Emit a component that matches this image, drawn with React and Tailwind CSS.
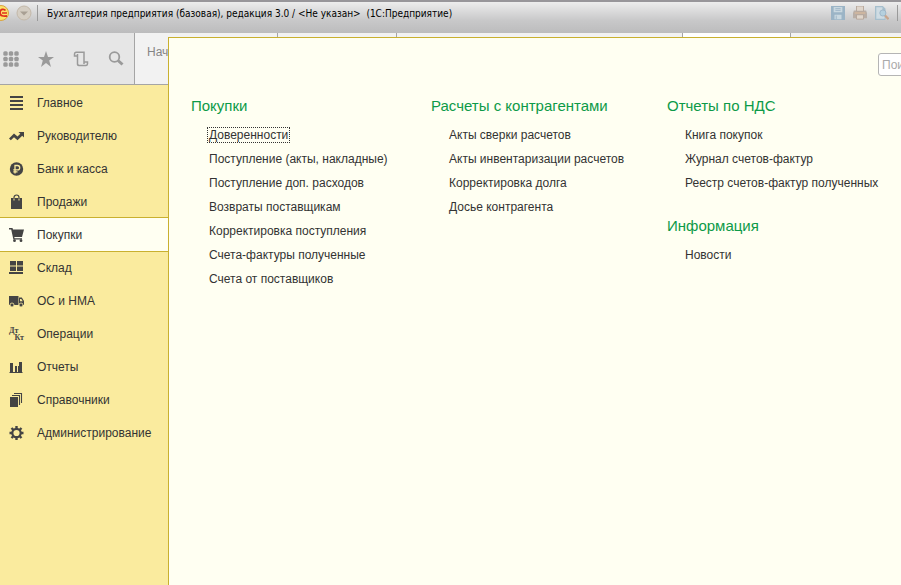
import React, { useState } from 'react';
import clsx from 'clsx';

function Icon({ children, size = 16, className }) {
  return (
    <svg width={size} height={size} viewBox="0 0 16 16" fill="currentColor" className={clsx('shrink-0', className)} aria-hidden="true">
      {children}
    </svg>
  );
}

const icons = {
  main: <Icon><path d="M2 1h13v2H2zM2 5h13v2H2zM2 9h13v2H2zM2 13h13v2H2z" /></Icon>,
  manager: <Icon><path d="M1 10.500L6 5.500l3.500 3 2.800-2.800L10.500 4H16v5.500L14.200 7.700 9.500 12.200 6 9.200 2.800 12.300z" /></Icon>,
  bank: (
    <Icon>
      <circle cx="8.500" cy="8" r="6.700" />
      <path d="M7 12.500V4.500h2.500a2.200 2.200 0 0 1 0 4.400H5.300M5.300 10.800H9.500" fill="none" stroke="#faeb9e" strokeWidth="1.300" />
    </Icon>
  ),
  sales: (
    <Icon>
      <path d="M3 4h11v11H3z" />
      <path d="M6 7V3.500a2.500 2.500 0 0 1 5 0V7" fill="none" stroke="currentColor" strokeWidth="1.200" />
      <path d="M6 4.500v2M11 4.500v2" stroke="#faeb9e" strokeWidth="1" />
    </Icon>
  ),
  purchases: (
    <Icon>
      <path d="M1 1h3.500L5 2.500h11L14 10H6.300l.3 1.200H14v1.300H5.400L3.200 2.500H1z" />
      <circle cx="6.500" cy="13.700" r="1.400" />
      <circle cx="13" cy="13.700" r="1.400" />
    </Icon>
  ),
  stock: <Icon><path d="M2 1h6v4.500H2zM9 1h6v4.500H9zM2 6.500h6V11H2zM9 6.500h6V11H9zM1 12h14v2H1z" /></Icon>,
  assets: (
    <Icon>
      <path d="M1 3h9.500v9H1zM11 4.500h2.800L16 8v4h-5z" />
      <path d="M12 6h1.300l1.400 2.200H12z" fill="#faeb9e" />
      <circle cx="4" cy="12" r="2" stroke="#faeb9e" strokeWidth=".8" />
      <circle cx="13" cy="12" r="2" stroke="#faeb9e" strokeWidth=".8" />
    </Icon>
  ),
  operations: (
    <span className="flex w-4 shrink-0 flex-col pl-px font-['Liberation_Serif',serif] text-[8px] leading-[7px] font-bold">
      <span>Дт</span>
      <span className="self-end">Кт</span>
    </span>
  ),
  reports: <Icon><path d="M2 4h3v9H2zM7 7h2v6H7zM10 7h1v6h-1zM11 3h3v10h-3zM1.500 13h13v1h-13z" /></Icon>,
  catalogs: (
    <Icon>
      <path d="M2 5h8v10H2z" />
      <path d="M4 3.500h7.500V13M6 1.500h7.500V11" fill="none" stroke="currentColor" strokeWidth="1.100" />
    </Icon>
  ),
  admin: (
    <Icon>
      <circle cx="8.500" cy="8" r="4.200" fill="none" stroke="currentColor" strokeWidth="2.200" />
      <path d="M8.500 1v3M8.500 12v3M1.500 8h3M12.500 8h3M3.500 3l2 2M11.500 11l2 2M13.500 3l-2 2M5.500 11l-2 2" stroke="currentColor" strokeWidth="2.400" />
    </Icon>
  ),
};

const sections = [
  { id: 'main', label: 'Главное' },
  { id: 'manager', label: 'Руководителю' },
  { id: 'bank', label: 'Банк и касса' },
  { id: 'sales', label: 'Продажи' },
  { id: 'purchases', label: 'Покупки' },
  { id: 'stock', label: 'Склад' },
  { id: 'assets', label: 'ОС и НМА' },
  { id: 'operations', label: 'Операции' },
  { id: 'reports', label: 'Отчеты' },
  { id: 'catalogs', label: 'Справочники' },
  { id: 'admin', label: 'Администрирование' },
];

const columns = [
  [
    {
      title: 'Покупки',
      links: [
        'Доверенности',
        'Поступление (акты, накладные)',
        'Поступление доп. расходов',
        'Возвраты поставщикам',
        'Корректировка поступления',
        'Счета-фактуры полученные',
        'Счета от поставщиков',
      ],
    },
  ],
  [
    {
      title: 'Расчеты с контрагентами',
      links: ['Акты сверки расчетов', 'Акты инвентаризации расчетов', 'Корректировка долга', 'Досье контрагента'],
    },
  ],
  [
    {
      title: 'Отчеты по НДС',
      links: ['Книга покупок', 'Журнал счетов-фактур', 'Реестр счетов-фактур полученных'],
    },
    { title: 'Информация', links: ['Новости'] },
  ],
];

function TitleBar() {
  return (
    <header className="flex h-[33px] items-start justify-between overflow-hidden border-t-2 border-[#98969a] bg-linear-to-b from-[#ededed] via-[#c8c8c9] via-60% to-[#bcbcbd]">
      <div className="flex h-[22px] items-center">
        <svg width="32" height="18" viewBox="0 0 32 18" aria-hidden="true">
          <circle cx="1" cy="9" r="7.500" fill="#fbe36a" stroke="#d9a441" />
          <path d="M5.500 6.500C4 4.500 0 5 0 8.500S3 12.500 7 12" fill="none" stroke="#e0301e" strokeWidth="1.800" />
          <path d="M2 9h5" stroke="#e0301e" strokeWidth="1.500" />
          <circle cx="24" cy="9" r="7" fill="#d5cec3" stroke="#c3b8a9" />
          <path d="M20 7.500h8L24 11.500z" fill="#a89f93" />
        </svg>
        <span className="ml-[5px] h-4 w-px bg-[#9a9a9a]"></span>
        <h1 className="ml-[9px] font-['DejaVu_Sans_Condensed','Liberation_Sans',sans-serif] text-[10px] whitespace-pre text-black">
          Бухгалтерия предприятия (базовая), редакция 3.0 / &lt;Не указан&gt;  (1С:Предприятие)
        </h1>
      </div>
      <div className="flex h-[22px] items-center gap-2">
        <button type="button" aria-label="Сохранить">
          <Icon size={14} className="text-[#9bb4c6]">
            <path d="M0 0h16v16H0z" />
            <path d="M3 1h10v6H3zM4 10h8v5H4z" fill="#c9d8e0" />
            <path d="M5 3h6M5 5h6M6 11v4" stroke="#9bb4c6" />
          </Icon>
        </button>
        <button type="button" aria-label="Печать">
          <Icon size={14} className="text-[#b9aea6]">
            <path d="M1 5h14l1 3v6H0V8z" />
            <path d="M4 0h8v6H4zM4 10h8v5H4z" fill="#e0d6cc" stroke="#b3a398" />
            <path d="M2 8h12" stroke="#d8b99c" strokeWidth="1.500" />
          </Icon>
        </button>
        <button type="button" aria-label="Предварительный просмотр">
          <Icon size={14} className="text-[#a6bfcd]">
            <path d="M0 0h9l3 3v13H0z" />
            <path d="M1.500 1.500h7v3h2.500v10H1.500z" fill="#cfdce3" />
            <circle cx="9" cy="8" r="3.500" fill="#b5d0de" stroke="#9bb4c6" />
            <path d="M11.500 11l4 4" stroke="#c9a58c" strokeWidth="2.500" />
          </Icon>
        </button>
        <span className="mr-[3px] h-4 w-px bg-[#9a9a9a]"></span>
      </div>
    </header>
  );
}

function QuickTools() {
  return (
    <div className="flex w-[135px] shrink-0 items-center justify-between border-r border-b border-[#a5a5a5] bg-[#e6e6e6] pr-[10px] pl-[3px] text-[#9a9a9a]">
      <button type="button" aria-label="Меню">
        <Icon>
          {[2.5, 8, 13.5].map((y) => [2.5, 8, 13.5].map((x) => (
            <rect key={`${x}-${y}`} x={x - 2.2} y={y - 2.2} width="4.400" height="4.400" rx="1.500" />
          )))}
        </Icon>
      </button>
      <button type="button" aria-label="Избранное">
        <Icon>
          <path d="M8 0l2 6h6l-4.800 3.600L13 16l-5-4-5 4 1.800-6.400L0 6h6z" />
        </Icon>
      </button>
      <button type="button" aria-label="История">
        <Icon>
          <path d="M4.500 5H1.500V3A1.800 1.800 0 0 1 3 1.300h8V11M4.500 3v9.500A1.800 1.800 0 0 0 6 14.500h7a1.800 1.800 0 0 0 1.500-1.800V11H11v2" fill="none" stroke="currentColor" strokeWidth="1.500" />
        </Icon>
      </button>
      <button type="button" aria-label="Поиск">
        <Icon>
          <circle cx="6.500" cy="6" r="4.800" fill="none" stroke="currentColor" strokeWidth="1.800" />
          <path d="M10 9.500l4.500 4" stroke="currentColor" strokeWidth="3" />
        </Icon>
      </button>
    </div>
  );
}

function Tabs() {
  return (
    <div className="flex min-w-0 flex-1 border-b border-[#a5a5a5] bg-[#f2f2f2] text-[12px] text-[#858585]">
      <button type="button" className="flex w-[143px] shrink-0 items-start border-r border-[#a5a5a5] pt-[10px] pl-3">
        Начальная страница
      </button>
      <span className="w-[119px] shrink-0 border-r border-[#a5a5a5]"></span>
      <span className="w-[286px] shrink-0 border-r border-[#a5a5a5]"></span>
      <span className="w-[108px] shrink-0 border-r border-[#a5a5a5] bg-white"></span>
    </div>
  );
}

function Sidebar({ active, onSelect }) {
  return (
    <nav className="w-[168px] flex-1 bg-[#faeb9e] pt-px">
      {sections.map((s) => (
        <button
          key={s.id}
          type="button"
          onClick={() => onSelect(s.id)}
          className={clsx(
            'flex w-full items-center gap-[13px] pl-2 text-left text-[12px] whitespace-nowrap text-[#333333]',
            s.id === active ? '-my-px h-[35px] border-y border-[#c9b02f] bg-[#fffff2]' : 'h-[33px]'
          )}
        >
          <span className="flex text-[#444444]">{icons[s.id]}</span>
          {s.label}
        </button>
      ))}
    </nav>
  );
}

function LinkGroup({ title, links }) {
  return (
    <section>
      <h2 className="text-[15px] leading-5 whitespace-nowrap text-[#0d9a48]">{title}</h2>
      <ul className="mt-[7px] pl-4">
        {links.map((link) => (
          <li key={link} className="flex h-6 items-center">
            <a
              href="#"
              className={clsx(
                'border border-dotted px-px text-[12px] leading-[14px] whitespace-nowrap text-[#333333]',
                link === 'Доверенности' ? 'border-[#333333]' : 'border-transparent'
              )}
            >
              {link}
            </a>
          </li>
        ))}
      </ul>
    </section>
  );
}

function SectionPanel() {
  return (
    <main className="absolute top-1 right-0 bottom-0 left-[168px] overflow-hidden border-t border-l border-[#c9b02f] bg-[#fffff2]">
      <div className="flex justify-end pt-[15px]">
        <input
          type="text"
          aria-label="Поиск"
          placeholder="Поиск"
          className="-mr-[130px] h-[23px] w-[153px] rounded-[3px] border border-[#b5b5b5] bg-white px-[3px] text-[12px] placeholder:text-[#aaaaaa]"
        />
      </div>
      <div className="grid grid-cols-[240px_236px_1fr] pt-5 pl-[22px]">
        {columns.map((groups, i) => (
          <div key={i} className="flex flex-col gap-[21px]">
            {groups.map((g) => (
              <LinkGroup key={g.title} title={g.title} links={g.links} />
            ))}
          </div>
        ))}
      </div>
    </main>
  );
}

function App() {
  const [active, setActive] = useState('purchases');

  return (
    <div className="flex min-h-screen flex-col overflow-hidden font-['Liberation_Sans',Arial,sans-serif]">
      <TitleBar />
      <div className="relative flex flex-1 flex-col">
        <div className="flex h-[52px]">
          <QuickTools />
          <Tabs />
        </div>
        <Sidebar active={active} onSelect={setActive} />
        <SectionPanel />
      </div>
    </div>
  );
}

export default App;
